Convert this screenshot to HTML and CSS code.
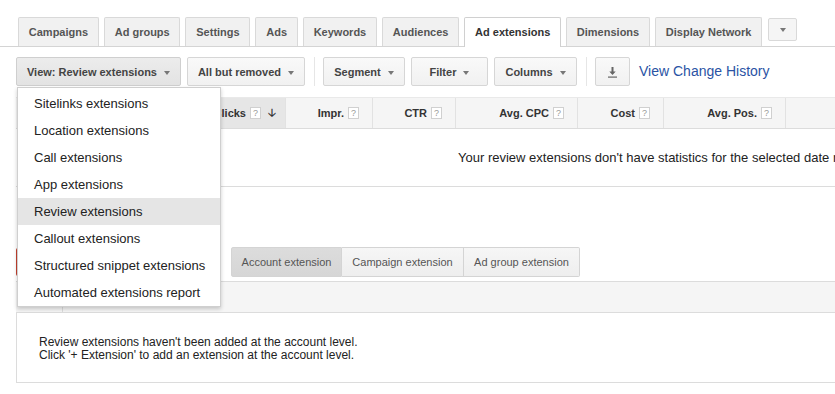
FILE: index.html
```html
<!DOCTYPE html>
<html lang="en">
<head>
    <meta charset="UTF-8">
    <title>Ad extensions</title>
    <link rel="stylesheet" href="styles.css">
</head>
<body>

<div class="tabs">
    <div class="tab">Campaigns</div>
    <div class="tab">Ad groups</div>
    <div class="tab">Settings</div>
    <div class="tab">Ads</div>
    <div class="tab">Keywords</div>
    <div class="tab">Audiences</div>
    <div class="tab active">Ad extensions</div>
    <div class="tab">Dimensions</div>
    <div class="tab">Display Network</div>
    <div class="tab more"><span class="caret"></span></div>
</div>

<div class="toolbar">
    <button class="btn pressed w-view">View: Review extensions <span class="caret"></span></button>
    <button class="btn w-status">All but removed <span class="caret"></span></button>
    <span class="sep"></span>
    <button class="btn w-segment">Segment <span class="caret"></span></button>
    <button class="btn w-filter">Filter <span class="caret"></span></button>
    <button class="btn w-columns">Columns <span class="caret"></span></button>
    <span class="sep"></span>
    <button class="btn download">
        <svg width="9" height="11" viewBox="0 0 9 11">
            <path d="M3.5 0h2v4.5h2.2L4.5 8 1.3 4.5h2.2z" fill="#666"/>
            <rect x="0" y="9.5" width="9" height="1.2" fill="#666"/>
        </svg>
    </button>
    <a href="#" class="history">View Change History</a>
</div>

<div class="stats">
    <div class="thead">
        <div class="th lead"></div>
        <div class="th sorted c-clicks">Clicks <span class="help">?</span> <span class="sort">&#129123;</span></div>
        <div class="th c-impr">Impr. <span class="help">?</span></div>
        <div class="th c-ctr">CTR <span class="help">?</span></div>
        <div class="th c-cpc">Avg. CPC <span class="help">?</span></div>
        <div class="th c-cost">Cost <span class="help">?</span></div>
        <div class="th c-pos">Avg. Pos. <span class="help">?</span></div>
        <div class="th rest"></div>
    </div>
    <div class="empty-row">Your review extensions don't have statistics for the selected date range.</div>
</div>

<div class="ext">
    <div class="ext-bar">
        <!-- red "+ Extension" button, mostly under the open menu -->
        <button class="add" aria-label="+ Extension"></button>
        <div class="seg">
            <button class="seg-btn active">Account extension</button>
            <button class="seg-btn">Campaign extension</button>
            <button class="seg-btn">Ad group extension</button>
        </div>
    </div>
    <div class="ext-head">
        <div class="ext-check"></div>
    </div>
    <div class="ext-body">
        Review extensions haven't been added at the account level.<br>
        Click '+ Extension' to add an extension at the account level.
    </div>
</div>

<!-- open "View" dropdown -->
<ul class="menu">
    <li>Sitelinks extensions</li>
    <li>Location extensions</li>
    <li>Call extensions</li>
    <li>App extensions</li>
    <li class="current">Review extensions</li>
    <li>Callout extensions</li>
    <li>Structured snippet extensions</li>
    <li>Automated extensions report</li>
</ul>

</body>
</html>
```

FILE: styles.css
```css
body {
    margin: 0;
    width: 835px;
    height: 394px;
    overflow: hidden;
    position: relative;
    background-color: #ffffff;
    font-family: "Liberation Sans", Arial, sans-serif;
    color: #333;
}
button {
    font-family: inherit;
    cursor: pointer;
}
.caret {
    display: inline-block;
    width: 0;
    height: 0;
    border-left: 3.5px solid transparent;
    border-right: 3.5px solid transparent;
    border-top: 4px solid #777;
    vertical-align: middle;
    margin-left: 4px;
}

/* Tabs */
.tabs {
    display: flex;
    align-items: flex-start;
    gap: 5px;
    height: 29px;
    padding: 17px 0 0 18px;
    border-bottom: 1px solid #d4d4d4;
}
.tab {
    box-sizing: border-box;
    height: 29px;
    line-height: 28px;
    padding: 0 9.8px;
    border: 1px solid #d9d9d9;
    border-bottom: none;
    border-radius: 2px 2px 0 0;
    background-color: #f1f1f1;
    font-size: 11px;
    font-weight: bold;
    color: #555;
    white-space: nowrap;
}
.tab.active {
    height: 30px;
    background-color: #ffffff;
    color: #333;
    border-color: #d0d0d0;
}
.tab.more {
    height: 23px;
    width: 29px;
    margin: 1px 0 0 1px;
    padding: 0;
    border-bottom: 1px solid #d9d9d9;
    border-radius: 2px;
    background-color: #f5f5f5;
    display: flex;
    justify-content: center;
    align-items: center;
}
.tab.more .caret {
    margin: 0;
}

/* Toolbar */
.toolbar {
    display: flex;
    align-items: center;
    gap: 6px;
    padding: 10px 0 0 16px;
}
.btn {
    box-sizing: border-box;
    height: 29px;
    padding: 0;
    border: 1px solid #d6d6d6;
    border-radius: 2px;
    background: linear-gradient(#f9f9f9, #f1f1f1);
    font-size: 11px;
    font-weight: bold;
    color: #444;
    white-space: nowrap;
}
.btn.pressed {
    background: linear-gradient(#ececec, #e3e3e3);
    border-color: #cfcfcf;
}
.w-view { width: 165px; }
.w-status { width: 118px; }
.w-segment { width: 82px; }
.w-filter { width: 77px; }
.w-columns { width: 83px; }
.btn.download {
    width: 35px;
    display: flex;
    justify-content: center;
    align-items: center;
    padding-top: 2px;
}
.sep {
    width: 1px;
    height: 29px;
    margin: 0 2px 0 3px;
    background-color: #e6e6e6;
}
.history {
    margin-left: 3px;
    font-size: 14px;
    color: #2a53a4;
    text-decoration: none;
    margin-top: -2px;
}

/* Statistics table */
.stats {
    margin: 11px 0 0 16px;
    width: 900px;
}
.thead {
    display: flex;
    height: 30px;
    border-top: 1px solid #e9e9e9;
    border-bottom: 1px solid #dcdcdc;
    background-color: #f5f5f5;
}
.th {
    box-sizing: border-box;
    display: flex;
    align-items: center;
    justify-content: flex-end;
    gap: 4px;
    padding-right: 13px;
    border-right: 1px solid #e2e2e2;
    font-size: 11px;
    font-weight: bold;
    color: #333;
    white-space: nowrap;
}
.th.sorted {
    background-color: #e6e6e6;
    padding-right: 9px;
}
.lead { width: 174px; }
.c-clicks { width: 96px; }
.c-impr { width: 87px; }
.c-ctr { width: 83px; }
.c-cpc { width: 122px; }
.c-cost { width: 86px; }
.c-pos { width: 122px; }
.rest { flex: 1; border-right: none; }
.help {
    box-sizing: border-box;
    display: inline-block;
    width: 11px;
    height: 12px;
    line-height: 10px;
    border: 1px solid #d0d0d0;
    background-color: #fff;
    text-align: center;
    font-size: 9px;
    font-weight: normal;
    color: #999;
}
.sort {
    font-size: 11px;
    color: #333;
    margin-left: 3px;
}
.empty-row {
    height: 57px;
    line-height: 57px;
    padding-left: 442px;
    border-bottom: 1px solid #dcdcdc;
    font-size: 13px;
    color: #222;
    white-space: nowrap;
}

/* Extensions list */
.ext {
    margin: 60px 0 0 16px;
    width: 900px;
}
.ext-bar {
    display: flex;
    align-items: center;
    height: 30px;
}
.add {
    height: 28px;
    width: 100px;
    margin-right: 115px;
    border: none;
    border-radius: 2px;
    background-color: #c5412f;
}
.seg {
    display: flex;
}
.seg-btn {
    box-sizing: border-box;
    height: 30px;
    border: 1px solid #d4d4d4;
    border-left: none;
    background: linear-gradient(#f6f6f6, #eeeeee);
    font-size: 11px;
    color: #555;
    padding: 0;
}
.seg-btn:first-child {
    border-left: 1px solid #d4d4d4;
    border-radius: 2px 0 0 2px;
    width: 111px;
}
.seg-btn:nth-child(2) { width: 122px; }
.seg-btn:last-child {
    width: 116px;
    border-radius: 0 2px 2px 0;
}
.seg-btn.active {
    background: linear-gradient(#dcdcdc, #d6d6d6);
    color: #555;
}
.ext-head {
    display: flex;
    height: 30px;
    margin-top: 4px;
    border-top: 1px solid #dcdcdc;
    border-bottom: 1px solid #dcdcdc;
    background-color: #f5f5f5;
}
.ext-check {
    width: 46px;
    border-right: 1px solid #dcdcdc;
}
.ext-body {
    height: 70px;
    box-sizing: border-box;
    padding: 23px 0 0 22px;
    border-left: 1px solid #dcdcdc;
    border-bottom: 1px solid #dcdcdc;
    font-size: 12px;
    line-height: 13px;
    color: #222;
}

/* Dropdown menu */
.menu {
    position: absolute;
    left: 17px;
    top: 87px;
    box-sizing: border-box;
    width: 204px;
    margin: 0;
    padding: 2px 0 0;
    list-style: none;
    background-color: #ffffff;
    border: 1px solid #cfcfcf;
    box-shadow: 0 2px 4px rgba(0, 0, 0, 0.2);
}
.menu li {
    height: 27px;
    line-height: 27px;
    padding-left: 16px;
    font-size: 13px;
    color: #222;
    white-space: nowrap;
}
.menu li.current {
    background-color: #e5e5e5;
}
```
